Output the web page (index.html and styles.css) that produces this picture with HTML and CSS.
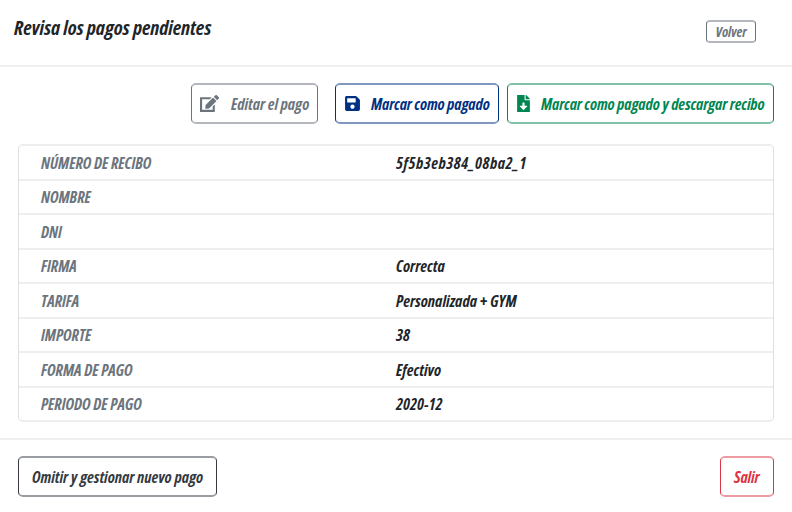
FILE: index.html
```html
<!DOCTYPE html>
<html lang="es">
<head>
<meta charset="utf-8">
<title>Revisa los pagos pendientes</title>
<link rel="stylesheet" href="styles.css">
</head>
<body>
<header class="header">
  <h1 class="title">Revisa los pagos pendientes</h1>
  <button class="btn btn-small">Volver</button>
</header>
<main class="content">
  <div class="actions">
    <button class="btn btn-edit">
      <svg class="icon icon-edit" viewBox="0 0 576 512"><path d="M402.600 83.200l90.200 90.200c3.800 3.800 3.800 10 0 13.800L274.400 405.600l-92.800 10.300c-12.400 1.400-22.900-9.100-21.500-21.500l10.300-92.800L388.800 83.200c3.800-3.800 10-3.800 13.800 0zm162-22.900l-48.800-48.800c-15.200-15.200-39.900-15.200-55.200 0l-35.400 35.400c-3.800 3.800-3.800 10 0 13.800l90.200 90.200c3.800 3.800 10 3.800 13.800 0l35.400-35.400c15.200-15.300 15.200-40 0-55.200zM384 346.200V448H64V128h229.800c3.200 0 6.200-1.300 8.500-3.500l40-40c7.600-7.600 2.200-20.500-8.500-20.500H0v448h448V306.200c0-10.700-12.900-16-20.500-8.500l-40 40c-2.200 2.300-3.500 5.300-3.500 8.500z"/></svg>
      <span>Editar el pago</span>
    </button>
    <button class="btn btn-save">
      <svg class="icon icon-save" viewBox="0 0 448 512"><path d="M433.900 129.900l-83.900-83.900A48 48 0 0 0 316.100 32H48C21.500 32 0 53.500 0 80v352c0 26.500 21.500 48 48 48h352c26.500 0 48-21.500 48-48V163.900a48 48 0 0 0-14.100-34zM224 416c-35.300 0-64-28.700-64-64s28.700-64 64-64 64 28.700 64 64-28.700 64-64 64zm96-304.500V212c0 6.600-5.400 12-12 12H76c-6.600 0-12-5.400-12-12V108c0-6.600 5.400-12 12-12h228.500c3.200 0 6.200 1.300 8.500 3.500l3.500 3.500a12 12 0 0 1 3.500 8.500z"/></svg>
      <span>Marcar como pagado</span>
    </button>
    <button class="btn btn-download">
      <svg class="icon icon-download" viewBox="0 0 384 512"><path d="M224 136V0H0v512h384V160H248c-13.200 0-24-10.800-24-24zm76.500 211.400L204.300 442.900c-6.800 6.800-17.800 6.800-24.600 0L83.500 347.400C73.400 337.300 80.500 320 94.800 320H160v-80c0-8.800 7.200-16 16-16h32c8.800 0 16 7.200 16 16v80h65.200c14.300 0 21.400 17.300 11.300 27.400zM384 112L272 0h-16v128h128z"/></svg>
      <span>Marcar como pagado y descargar recibo</span>
    </button>
  </div>
  <dl class="details">
    <div class="row"><dt>NÚMERO DE RECIBO</dt><dd class="code">5f5b3eb384_08ba2_1</dd></div>
    <div class="row"><dt>NOMBRE</dt><dd></dd></div>
    <div class="row"><dt>DNI</dt><dd></dd></div>
    <div class="row"><dt>FIRMA</dt><dd>Correcta</dd></div>
    <div class="row"><dt>TARIFA</dt><dd>Personalizada + GYM</dd></div>
    <div class="row"><dt>IMPORTE</dt><dd>38</dd></div>
    <div class="row"><dt>FORMA DE PAGO</dt><dd>Efectivo</dd></div>
    <div class="row"><dt>PERIODO DE PAGO</dt><dd>2020-12</dd></div>
  </dl>
</main>
<footer class="footer">
  <button class="btn btn-skip">Omitir y gestionar nuevo pago</button>
  <button class="btn btn-exit">Salir</button>
</footer>
</body>
</html>
```
FILE: styles.css
```css
* {
  box-sizing: border-box;
}

body {
  margin: 0;
  background: #fff;
  color: #212529;
  font: italic 700 16px/20px "Open Sans", sans-serif;
  font-stretch: 75%;
}

.header {
  display: flex;
  justify-content: space-between;
  height: 67px;
  padding: 15px 36px 0 14px;
  border-bottom: 2px solid #efefef;
}

.title {
  margin: 0;
  font-size: 20px;
  font-weight: 700;
  line-height: 26px;
  letter-spacing: -0.06px;
}

.btn {
  display: flex;
  align-items: center;
  height: 41px;
  padding: 1px 0 0;
  border: solid;
  border-width: 2px 1px;
  border-radius: 5px;
  background: #fff;
  font: inherit;
  font-stretch: 75%;
  letter-spacing: -0.13px;
  white-space: nowrap;
}

.btn-small {
  justify-content: center;
  width: 50px;
  height: 23px;
  margin-top: 5px;
  padding: 0;
  border-color: #b3b7bb #6c757d;
  border-radius: 4px;
  color: #6c757d;
  font-size: 14px;
}

.content {
  padding: 16px 18px 16px;
}

.actions {
  display: flex;
  justify-content: flex-end;
}

.icon {
  flex: none;
  height: 17px;
  margin-bottom: 2px;
  fill: currentColor;
}

.icon-edit {
  width: 19px;
  margin-right: 12px;
}

.icon-save {
  width: 15px;
  margin-right: 11px;
}

.icon-download {
  width: 13px;
  margin-right: 11px;
}

.btn-edit {
  width: 127px;
  margin-right: 17px;
  padding-left: 8px;
  border-color: #b3b7bb #6c757d;
  color: #6c757d;
  letter-spacing: -0.03px;
}

.btn-save {
  width: 164px;
  margin-right: 8px;
  padding-left: 9px;
  border-color: #8097c1 #003083;
  color: #003083;
}

.btn-download {
  width: 267px;
  padding-left: 9px;
  border-color: #80c2a8 #008651;
  color: #008651;
}

.details {
  margin: 20px 0 0;
  border: solid;
  border-width: 2px 1px;
  border-color: #eee #dfdfdf;
  border-radius: 5px;
}

.row {
  display: grid;
  grid-template-columns: 355px 1fr;
  height: 34px;
  padding: 6px 0 0 22px;
  border-bottom: 2px solid #eee;
}

.row:nth-child(odd) {
  height: 35px;
  padding-top: 7px;
}

.row:last-child {
  height: 32px;
  border-bottom: 0;
}

dt {
  color: #6c757d;
  letter-spacing: -0.04px;
}

dd {
  margin: 0;
  letter-spacing: 0.04px;
}

.code {
  letter-spacing: 0.56px;
}

.footer {
  display: flex;
  justify-content: space-between;
  padding: 16px 18px;
  border-top: 2px solid #efefef;
}

.btn-skip {
  width: 199px;
  padding-left: 13px;
  border-color: #999ca0 #343a40;
  color: #343a40;
  letter-spacing: -0.01px;
}

.btn-exit {
  width: 54px;
  padding-left: 13px;
  border-color: #ee9aa2 #dc3545;
  color: #dc3545;
}
```
